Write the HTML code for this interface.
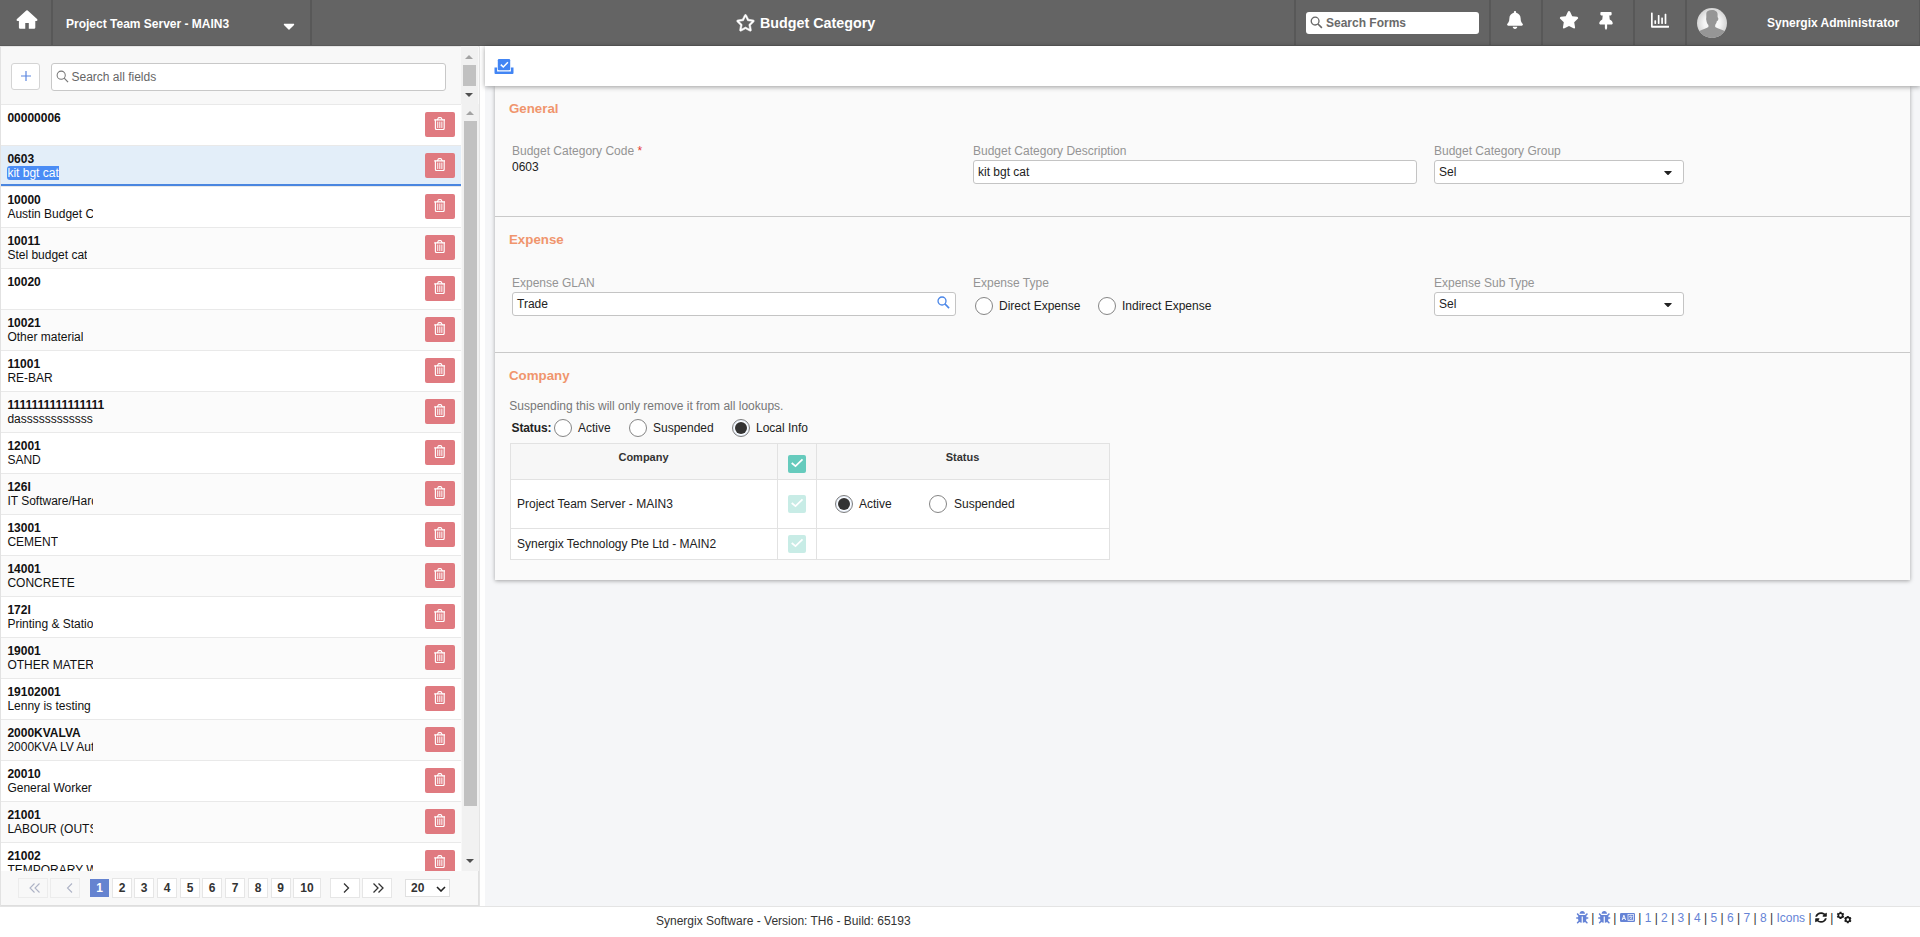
<!DOCTYPE html>
<html>
<head>
<meta charset="utf-8">
<title>Budget Category</title>
<style>
*{box-sizing:border-box;margin:0;padding:0}
html,body{width:1920px;height:937px;overflow:hidden}
body{font-family:"Liberation Sans",sans-serif;font-size:12px;color:#111;background:#f5f6f8;position:relative}
.abs{position:absolute}
/* header */
#hdr{position:absolute;left:0;top:0;width:1920px;height:46px;background:#646464;border-bottom:1px solid #5a5a5a;color:#fff}
#hdr .sep{position:absolute;top:0;width:2px;height:45px;background:#585858}
#hdr .t{position:absolute;font-weight:bold;white-space:nowrap}

.hi{position:absolute;fill:#fff}
.sfrm{position:absolute;left:1306px;top:12px;width:173px;height:22px;background:#fff;border-radius:3px}
.sfrm span{position:absolute;left:20px;top:4px;font-size:12px;line-height:14px;font-weight:bold;color:#6a6a6a;white-space:nowrap}
/* left */
#left{position:absolute;left:0;top:46px;width:480px;height:861px;background:#f8f8f8;box-shadow:inset 0 1px 0 #e6e6e6,inset 1px 0 0 #e2e2e2,inset -1px 0 0 #e4e4e4,inset 0 -2px 0 #dedede}
.row{position:absolute;left:1px;width:460px;height:41px;border-top:1px solid #e9e9e9;background:#fff}
.row.alt{background:#fbfbfb}
.row b{position:absolute;left:6.400px;top:6px;font-size:12px;line-height:14px;white-space:nowrap}
.row span{position:absolute;left:6.400px;top:20px;font-size:12px;line-height:14px;white-space:nowrap;max-width:85.600px;overflow:hidden}
.del{position:absolute;left:424px;top:7px;width:30px;height:25px;background:#e07a80;border-radius:2px}

.addb{position:absolute;left:11px;top:17px;width:29px;height:27px;border:1px solid #d4d4d4;border-radius:3px;background:#fff}
.addb svg{position:absolute;left:8.500px;top:6.500px}
.srch{position:absolute;left:51px;top:17px;width:395px;height:28px;border:1px solid #c8c8c8;border-radius:3px;background:#fff}
.srch span{position:absolute;left:19.500px;top:6px;font-size:12px;line-height:14px;color:#666}
#list{position:absolute;left:0;top:0;width:461px;height:825px;overflow:hidden}
.row.sel{background:#e3eef9;border-bottom:2px solid #4a86e0;height:41px}
.row i{font-style:normal;background:#4a8cf5;color:#fff;border-radius:3px 0 0 3px}
.tr{position:absolute;left:8.600px;top:4.900px;width:11.600px;height:13.200px}
.sb{position:absolute;width:17px;background:#f1f1f1}
.sb .th{position:absolute;left:2px;width:13px;background:#c1c1c1}
.sb .up{position:absolute;left:4px;width:0;height:0;border-left:4px solid transparent;border-right:4px solid transparent;border-bottom:4px solid #a3a3a3}
.sb .dn{position:absolute;left:4px;width:0;height:0;border-left:4px solid transparent;border-right:4px solid transparent;border-top:4px solid #505050}
#pag{position:absolute;left:1px;top:825px;width:478px;height:34px;background:#f8f8f8;border-right:1px solid #e0e0e0}
.pb{position:absolute;top:7px;width:20px;height:20px;border:1px solid #e6e6e6;background:#fff;text-align:center;font-size:12px;line-height:18px;color:#333;font-weight:bold}
.pb.act{background:#6583d0;border-color:#6583d0;color:#fff;font-weight:bold;-webkit-text-stroke:0}
.pb.dis{background:#f8f8f8;border-color:#ececec}
.pb svg{position:absolute;top:3.500px;left:9px}
.psel{position:absolute;left:404px;top:8px;width:45px;height:18px;border:1px solid #e0e0e0;background:#fff;font-size:12px;font-weight:bold;line-height:16px;padding-left:5px;color:#333}

#form{position:absolute;left:0;top:0;width:0;height:0}
.car{position:absolute;right:11.500px;top:4.500px;width:8px;height:13px;fill:#222}
.inp{overflow:visible}
.tbl{position:absolute;left:510px;top:443px;width:600px;height:117px;border:1px solid #e2e2e2;background:#fff}
.tbl .th{position:absolute;background:#f7f7f7}
.tbl .vl{position:absolute;top:0;width:1px;height:115px;background:#e2e2e2}
.tbl .hl{position:absolute;left:0;width:598px;height:1px;background:#e2e2e2}
.tbl .thd{position:absolute;top:7px;text-align:center;font-size:11px;line-height:13px;font-weight:bold;color:#333}
.chk{position:absolute;width:18px;height:18px;border-radius:2px}
.chk svg{position:absolute;left:0;top:0;width:18px;height:18px}
/* footer */
#ftr{position:absolute;left:0;top:906px;width:1920px;height:31px;background:#fff;border-top:1px solid #e4e4e4}

.fb{position:absolute;top:4px;font-size:12px;line-height:14px;color:#333}
.flinks{position:absolute;top:4px;font-size:12px;line-height:14px;color:#6583d6;white-space:pre}
.flinks span{color:#333}
/* right */
#tool{position:absolute;left:485px;top:46px;width:1435px;height:40px;background:#fff;box-shadow:0 1px 5px rgba(0,0,0,.38);z-index:3}
#card{position:absolute;left:495px;top:86px;width:1415px;height:494px;background:#fafafa;box-shadow:0 1px 4px rgba(0,0,0,.34)}
.sec{position:absolute;font-size:13.3px;line-height:16px;font-weight:bold;color:#f0956d;white-space:nowrap}
.lbl{position:absolute;font-size:12px;line-height:14px;color:#949494;white-space:nowrap}
.txt{position:absolute;font-size:12px;line-height:14px;color:#222;white-space:nowrap}
.inp{position:absolute;height:24px;border:1px solid #c4c4c4;border-radius:3px;background:#fff;font-size:12px;line-height:22px;padding-left:4px;color:#222}
.hr{position:absolute;left:495px;width:1415px;height:1px;background:#c9c9c9}
.radio{position:absolute;width:18px;height:18px;border:1px solid #858585;border-radius:50%;background:#fff}
.radio.on{border-color:#7d7d7d;box-shadow:inset 0 0 0 1px #e4eefc}
.radio.on:after{content:'';position:absolute;left:2px;top:2px;width:12px;height:12px;border-radius:50%;background:#333}
</style>
</head>
<body>
<div id="hdr">
  <svg class="hi" style="left:16px;top:9px;width:22px;height:21px" viewBox="16 9 22 21"><path d="M26.300 10.600Q27 10 27.700 10.600L37.300 19.300Q38 20.900 36.400 20.900L35.300 20.900L35.300 27.600Q35.300 28.800 34.100 28.800L28.800 28.800L28.800 23.100L25.250 23.100L25.250 28.800L20.100 28.800Q18.900 28.800 18.900 27.600L18.900 20.900L17.600 20.900Q16 20.900 16.700 19.300Z"/></svg>
  <div class="sep" style="left:51px"></div>
  <div class="t" style="left:66px;top:17px;font-size:12px">Project Team Server - MAIN3</div>
  <svg class="hi" style="left:282px;top:17px;width:14px;height:18px" viewBox="0 0 320 512"><path d="M31.300 192h257.300c17.800 0 26.700 21.500 14.100 34.100L174.100 354.800c-7.800 7.800-20.500 7.800-28.300 0L17.200 226.100C4.600 213.500 13.500 192 31.300 192z"/></svg>
  <div class="sep" style="left:310px"></div>
  <svg class="hi" style="left:736px;top:14px;width:19px;height:17.500px;stroke:#fff;stroke-width:16" viewBox="0 0 576 512"><path d="M528.100 171.500L382 150.200 316.700 17.800c-11.700-23.600-45.600-23.900-57.400 0L194 150.200 47.900 171.500c-26.200 3.800-36.700 36.100-17.700 54.600l105.700 103-25 145.500c-4.500 26.300 23.200 46 46.400 33.700L288 439.600l130.700 68.700c23.200 12.200 50.900-7.400 46.400-33.700l-25-145.500 105.700-103c19-18.500 8.500-50.800-17.700-54.600zM388.600 312.300l23.700 138.400L288 385.400l-124.300 65.300 23.700-138.400-100.600-98 139-20.200 62.200-126 62.200 126 139 20.200-100.600 98z"/></svg>
  <div class="t" style="left:760px;top:15px;font-size:14.3px">Budget Category</div>
  <div class="sep" style="left:1294px"></div>
  <div class="sfrm"><svg viewBox="0 0 14 14" style="position:absolute;left:3.500px;top:4.400px;width:13px;height:13px"><circle cx="5.500" cy="5.500" r="4.200" stroke="#666" stroke-width="1.400" fill="none"/><path d="M8.600 8.600L12.800 12.800" stroke="#666" stroke-width="1.700" fill="none"/></svg><span>Search Forms</span></div>
  <div class="sep" style="left:1489px"></div>
  <svg class="hi" style="left:1507px;top:10.5px;width:16px;height:18px" viewBox="0 0 448 512"><path d="M224 512c35.320 0 63.970-28.650 63.970-64H160.030c0 35.350 28.650 64 63.970 64zm215.390-149.710c-19.320-20.760-55.470-51.990-55.470-154.290 0-77.700-54.480-139.900-127.940-155.160V32c0-17.670-14.320-32-31.980-32s-31.980 14.330-31.980 32v20.840C118.560 68.100 64.080 130.300 64.080 208c0 102.300-36.150 133.530-55.470 154.290-6 6.450-8.660 14.160-8.610 21.710.110 16.400 12.980 32 32.100 32h383.800c19.120 0 32-15.600 32.100-32 .050-7.550-2.610-15.270-8.610-21.710z"/></svg>
  <div class="sep" style="left:1541px"></div>
  <svg class="hi" style="left:1559px;top:11px;width:20px;height:17.5px" viewBox="0 0 576 512"><path d="M259.300 17.800L194 150.200 47.900 171.500c-26.200 3.800-36.700 36.100-17.700 54.600l105.700 103-25 145.500c-4.500 26.300 23.200 46 46.400 33.700L288 439.600l130.700 68.700c23.200 12.200 50.900-7.400 46.400-33.700l-25-145.500 105.700-103c19-18.500 8.500-50.800-17.700-54.600L382 150.200 316.700 17.800c-11.700-23.600-45.600-23.900-57.400 0z"/></svg>
  <svg class="hi" style="left:1598.5px;top:11.5px;width:14px;height:18px" viewBox="0 0 384 512"><path d="M298.028 214.267L285.793 96H328c13.255 0 24-10.745 24-24V24c0-13.255-10.745-24-24-24H56C42.745 0 32 10.745 32 24v48c0 13.255 10.745 24 24 24h42.207L85.972 214.267C37.465 236.820 0 277.261 0 328c0 13.255 10.745 24 24 24h136v104.007c0 1.242.289 2.467.845 3.578l24 48c2.941 5.882 11.364 5.893 14.311 0l24-48a8.008 8.008 0 0 0 .845-3.578V352h136c13.255 0 24-10.745 24-24-.001-51.183-37.983-91.420-85.973-113.733z"/></svg>
  <div class="sep" style="left:1633px"></div>
  <svg class="hi" style="left:1651px;top:10.3px;width:18.2px;height:20.3px" preserveAspectRatio="none" viewBox="0 0 512 512"><path d="M396.800 352h22.400c6.400 0 12.800-6.400 12.800-12.800V108.800c0-6.400-6.400-12.800-12.800-12.800h-22.400c-6.400 0-12.800 6.400-12.800 12.800v230.400c0 6.400 6.400 12.800 12.800 12.800zm-192 0h22.400c6.400 0 12.800-6.400 12.800-12.800V140.800c0-6.400-6.400-12.800-12.800-12.800h-22.400c-6.400 0-12.800 6.400-12.800 12.800v198.400c0 6.400 6.400 12.800 12.800 12.800zm96 0h22.400c6.400 0 12.800-6.400 12.800-12.800V204.800c0-6.400-6.400-12.800-12.800-12.800h-22.400c-6.400 0-12.800 6.400-12.800 12.800v134.400c0 6.400 6.400 12.800 12.800 12.800zM496 400H48V80c0-8.840-7.160-16-16-16H16C7.160 64 0 71.160 0 80v336c0 17.670 14.330 32 32 32h464c8.840 0 16-7.160 16-16v-16c0-8.840-7.160-16-16-16zm-387.200-48h22.400c6.400 0 12.800-6.400 12.800-12.800v-70.400c0-6.400-6.400-12.800-12.800-12.800h-22.400c-6.400 0-12.800 6.400-12.800 12.800v70.400c0 6.400 6.400 12.800 12.800 12.800z"/></svg>
  <div class="sep" style="left:1685px"></div>
  <svg class="abs" style="left:1697px;top:8px;width:30px;height:30px" viewBox="0 0 30 30"><defs><radialGradient id="avg" cx="50%" cy="50%" r="50%"><stop offset="0" stop-color="#fff"/><stop offset="0.55" stop-color="#f4f4f4"/><stop offset="1" stop-color="#d4d4d4"/></radialGradient><clipPath id="avc"><circle cx="15" cy="15" r="15"/></clipPath></defs><circle cx="15" cy="15" r="15" fill="url(#avg)"/><g clip-path="url(#avc)" fill="#969696"><path d="M9.300 5.500c0-2.200 2.200-3.600 5.700-3.600 3.400 0 5.600 1.600 5.600 4.200v3.200c.6.300.9 1 .7 1.900-.2 1-.8 1.700-1.400 1.900-.3 1.700-1 3-1.700 3.800v2c2 1.200 6.500 2.600 9.800 4.400v7H2v-7c3.300-1.800 7.400-3.200 9.400-4.400v-2c-.9-.8-1.800-2.400-2-4.400-.3-.9-.3-2.300-.1-3.300z"/></g></svg>
  <div class="sep" style="left:1919px;width:1px"></div>
  <div class="t" style="left:1767px;top:16px;font-size:12px">Synergix Administrator</div>
</div>

<div id="left">
  <div class="addb"><svg viewBox="0 0 10 10" width="10" height="10"><path d="M5 0v10M0 5h10" stroke="#5b86e0" stroke-width="1.200" fill="none"/></svg></div>
  <div class="srch"><svg viewBox="0 0 14 14" width="13" height="13" style="position:absolute;left:3.500px;top:6px"><circle cx="5.6" cy="5.6" r="4.4" stroke="#777" stroke-width="1.1" fill="none"/><path d="M8.8 8.8L13 13" stroke="#777" stroke-width="1.3" fill="none"/></svg><span>Search all fields</span></div>
  <div id="list">
<div class="row" style="top:58px"><b>00000006</b><div class="del"><svg class="tr" viewBox="0 0 11.6 13.2"><g fill="none" stroke="#fff" stroke-linecap="round" stroke-linejoin="round"><path d="M0.600 2.900H11" stroke-width="1.150"/><path d="M3.400 2.800L4.300 0.900Q4.500 0.600 4.900 0.600H6.700Q7.100 0.600 7.300 0.900L8.200 2.800" stroke-width="1.100"/><path d="M1.400 3.200V11.200Q1.400 12.600 2.800 12.600H8.800Q10.200 12.600 10.200 11.200V3.200" stroke-width="1.150"/><path d="M3.750 5V10.600M5.800 5V10.600M7.850 5V10.600" stroke-width="0.950"/></g></svg></div></div>
<div class="row alt sel" style="top:99px"><b>0603</b><span><i>kit bgt cat</i></span><div class="del"><svg class="tr" viewBox="0 0 11.6 13.2"><g fill="none" stroke="#fff" stroke-linecap="round" stroke-linejoin="round"><path d="M0.600 2.900H11" stroke-width="1.150"/><path d="M3.400 2.800L4.300 0.900Q4.500 0.600 4.900 0.600H6.700Q7.100 0.600 7.300 0.900L8.200 2.800" stroke-width="1.100"/><path d="M1.400 3.200V11.200Q1.400 12.600 2.800 12.600H8.800Q10.200 12.600 10.200 11.200V3.200" stroke-width="1.150"/><path d="M3.750 5V10.600M5.800 5V10.600M7.850 5V10.600" stroke-width="0.950"/></g></svg></div></div>
<div class="row" style="top:140px"><b>10000</b><span>Austin Budget C</span><div class="del"><svg class="tr" viewBox="0 0 11.6 13.2"><g fill="none" stroke="#fff" stroke-linecap="round" stroke-linejoin="round"><path d="M0.600 2.900H11" stroke-width="1.150"/><path d="M3.400 2.800L4.300 0.900Q4.500 0.600 4.900 0.600H6.700Q7.100 0.600 7.300 0.900L8.200 2.800" stroke-width="1.100"/><path d="M1.400 3.200V11.200Q1.400 12.600 2.800 12.600H8.800Q10.200 12.600 10.200 11.200V3.200" stroke-width="1.150"/><path d="M3.750 5V10.600M5.800 5V10.600M7.850 5V10.600" stroke-width="0.950"/></g></svg></div></div>
<div class="row alt" style="top:181px"><b>10011</b><span>Stel budget cat</span><div class="del"><svg class="tr" viewBox="0 0 11.6 13.2"><g fill="none" stroke="#fff" stroke-linecap="round" stroke-linejoin="round"><path d="M0.600 2.900H11" stroke-width="1.150"/><path d="M3.400 2.800L4.300 0.900Q4.500 0.600 4.900 0.600H6.700Q7.100 0.600 7.300 0.900L8.200 2.800" stroke-width="1.100"/><path d="M1.400 3.200V11.200Q1.400 12.600 2.800 12.600H8.800Q10.200 12.600 10.200 11.200V3.200" stroke-width="1.150"/><path d="M3.750 5V10.600M5.800 5V10.600M7.850 5V10.600" stroke-width="0.950"/></g></svg></div></div>
<div class="row" style="top:222px"><b>10020</b><div class="del"><svg class="tr" viewBox="0 0 11.6 13.2"><g fill="none" stroke="#fff" stroke-linecap="round" stroke-linejoin="round"><path d="M0.600 2.900H11" stroke-width="1.150"/><path d="M3.400 2.800L4.300 0.900Q4.500 0.600 4.900 0.600H6.700Q7.100 0.600 7.300 0.900L8.200 2.800" stroke-width="1.100"/><path d="M1.400 3.200V11.200Q1.400 12.600 2.800 12.600H8.800Q10.200 12.600 10.200 11.200V3.200" stroke-width="1.150"/><path d="M3.750 5V10.600M5.800 5V10.600M7.850 5V10.600" stroke-width="0.950"/></g></svg></div></div>
<div class="row alt" style="top:263px"><b>10021</b><span>Other material</span><div class="del"><svg class="tr" viewBox="0 0 11.6 13.2"><g fill="none" stroke="#fff" stroke-linecap="round" stroke-linejoin="round"><path d="M0.600 2.900H11" stroke-width="1.150"/><path d="M3.400 2.800L4.300 0.900Q4.500 0.600 4.900 0.600H6.700Q7.100 0.600 7.300 0.900L8.200 2.800" stroke-width="1.100"/><path d="M1.400 3.200V11.200Q1.400 12.600 2.800 12.600H8.800Q10.200 12.600 10.200 11.200V3.200" stroke-width="1.150"/><path d="M3.750 5V10.600M5.800 5V10.600M7.850 5V10.600" stroke-width="0.950"/></g></svg></div></div>
<div class="row" style="top:304px"><b>11001</b><span>RE-BAR</span><div class="del"><svg class="tr" viewBox="0 0 11.6 13.2"><g fill="none" stroke="#fff" stroke-linecap="round" stroke-linejoin="round"><path d="M0.600 2.900H11" stroke-width="1.150"/><path d="M3.400 2.800L4.300 0.900Q4.500 0.600 4.900 0.600H6.700Q7.100 0.600 7.300 0.900L8.200 2.800" stroke-width="1.100"/><path d="M1.400 3.200V11.200Q1.400 12.600 2.800 12.600H8.800Q10.200 12.600 10.200 11.200V3.200" stroke-width="1.150"/><path d="M3.750 5V10.600M5.800 5V10.600M7.850 5V10.600" stroke-width="0.950"/></g></svg></div></div>
<div class="row alt" style="top:345px"><b>1111111111111111</b><span>dasssssssssssss</span><div class="del"><svg class="tr" viewBox="0 0 11.6 13.2"><g fill="none" stroke="#fff" stroke-linecap="round" stroke-linejoin="round"><path d="M0.600 2.900H11" stroke-width="1.150"/><path d="M3.400 2.800L4.300 0.900Q4.500 0.600 4.900 0.600H6.700Q7.100 0.600 7.300 0.900L8.200 2.800" stroke-width="1.100"/><path d="M1.400 3.200V11.200Q1.400 12.600 2.800 12.600H8.800Q10.200 12.600 10.200 11.200V3.200" stroke-width="1.150"/><path d="M3.750 5V10.600M5.800 5V10.600M7.850 5V10.600" stroke-width="0.950"/></g></svg></div></div>
<div class="row" style="top:386px"><b>12001</b><span>SAND</span><div class="del"><svg class="tr" viewBox="0 0 11.6 13.2"><g fill="none" stroke="#fff" stroke-linecap="round" stroke-linejoin="round"><path d="M0.600 2.900H11" stroke-width="1.150"/><path d="M3.400 2.800L4.300 0.900Q4.500 0.600 4.900 0.600H6.700Q7.100 0.600 7.300 0.900L8.200 2.800" stroke-width="1.100"/><path d="M1.400 3.200V11.200Q1.400 12.600 2.800 12.600H8.800Q10.200 12.600 10.200 11.200V3.200" stroke-width="1.150"/><path d="M3.750 5V10.600M5.800 5V10.600M7.850 5V10.600" stroke-width="0.950"/></g></svg></div></div>
<div class="row alt" style="top:427px"><b>126I</b><span>IT Software/Hardware</span><div class="del"><svg class="tr" viewBox="0 0 11.6 13.2"><g fill="none" stroke="#fff" stroke-linecap="round" stroke-linejoin="round"><path d="M0.600 2.900H11" stroke-width="1.150"/><path d="M3.400 2.800L4.300 0.900Q4.500 0.600 4.900 0.600H6.700Q7.100 0.600 7.300 0.900L8.200 2.800" stroke-width="1.100"/><path d="M1.400 3.200V11.200Q1.400 12.600 2.800 12.600H8.800Q10.200 12.600 10.200 11.200V3.200" stroke-width="1.150"/><path d="M3.750 5V10.600M5.800 5V10.600M7.850 5V10.600" stroke-width="0.950"/></g></svg></div></div>
<div class="row" style="top:468px"><b>13001</b><span>CEMENT</span><div class="del"><svg class="tr" viewBox="0 0 11.6 13.2"><g fill="none" stroke="#fff" stroke-linecap="round" stroke-linejoin="round"><path d="M0.600 2.900H11" stroke-width="1.150"/><path d="M3.400 2.800L4.300 0.900Q4.500 0.600 4.900 0.600H6.700Q7.100 0.600 7.300 0.900L8.200 2.800" stroke-width="1.100"/><path d="M1.400 3.200V11.200Q1.400 12.600 2.800 12.600H8.800Q10.200 12.600 10.200 11.200V3.200" stroke-width="1.150"/><path d="M3.750 5V10.600M5.800 5V10.600M7.850 5V10.600" stroke-width="0.950"/></g></svg></div></div>
<div class="row alt" style="top:509px"><b>14001</b><span>CONCRETE</span><div class="del"><svg class="tr" viewBox="0 0 11.6 13.2"><g fill="none" stroke="#fff" stroke-linecap="round" stroke-linejoin="round"><path d="M0.600 2.900H11" stroke-width="1.150"/><path d="M3.400 2.800L4.300 0.900Q4.500 0.600 4.900 0.600H6.700Q7.100 0.600 7.300 0.900L8.200 2.800" stroke-width="1.100"/><path d="M1.400 3.200V11.200Q1.400 12.600 2.800 12.600H8.800Q10.200 12.600 10.200 11.200V3.200" stroke-width="1.150"/><path d="M3.750 5V10.600M5.800 5V10.600M7.850 5V10.600" stroke-width="0.950"/></g></svg></div></div>
<div class="row" style="top:550px"><b>172I</b><span>Printing &amp; Stationery</span><div class="del"><svg class="tr" viewBox="0 0 11.6 13.2"><g fill="none" stroke="#fff" stroke-linecap="round" stroke-linejoin="round"><path d="M0.600 2.900H11" stroke-width="1.150"/><path d="M3.400 2.800L4.300 0.900Q4.500 0.600 4.900 0.600H6.700Q7.100 0.600 7.300 0.900L8.200 2.800" stroke-width="1.100"/><path d="M1.400 3.200V11.200Q1.400 12.600 2.800 12.600H8.800Q10.200 12.600 10.200 11.200V3.200" stroke-width="1.150"/><path d="M3.750 5V10.600M5.800 5V10.600M7.850 5V10.600" stroke-width="0.950"/></g></svg></div></div>
<div class="row alt" style="top:591px"><b>19001</b><span>OTHER MATERIAL</span><div class="del"><svg class="tr" viewBox="0 0 11.6 13.2"><g fill="none" stroke="#fff" stroke-linecap="round" stroke-linejoin="round"><path d="M0.600 2.900H11" stroke-width="1.150"/><path d="M3.400 2.800L4.300 0.900Q4.500 0.600 4.900 0.600H6.700Q7.100 0.600 7.300 0.900L8.200 2.800" stroke-width="1.100"/><path d="M1.400 3.200V11.200Q1.400 12.600 2.800 12.600H8.800Q10.200 12.600 10.200 11.200V3.200" stroke-width="1.150"/><path d="M3.750 5V10.600M5.800 5V10.600M7.850 5V10.600" stroke-width="0.950"/></g></svg></div></div>
<div class="row" style="top:632px"><b>19102001</b><span>Lenny is testing</span><div class="del"><svg class="tr" viewBox="0 0 11.6 13.2"><g fill="none" stroke="#fff" stroke-linecap="round" stroke-linejoin="round"><path d="M0.600 2.900H11" stroke-width="1.150"/><path d="M3.400 2.800L4.300 0.900Q4.500 0.600 4.900 0.600H6.700Q7.100 0.600 7.300 0.900L8.200 2.800" stroke-width="1.100"/><path d="M1.400 3.200V11.200Q1.400 12.600 2.800 12.600H8.800Q10.200 12.600 10.200 11.200V3.200" stroke-width="1.150"/><path d="M3.750 5V10.600M5.800 5V10.600M7.850 5V10.600" stroke-width="0.950"/></g></svg></div></div>
<div class="row alt" style="top:673px"><b>2000KVALVA</b><span>2000KVA LV Auto</span><div class="del"><svg class="tr" viewBox="0 0 11.6 13.2"><g fill="none" stroke="#fff" stroke-linecap="round" stroke-linejoin="round"><path d="M0.600 2.900H11" stroke-width="1.150"/><path d="M3.400 2.800L4.300 0.900Q4.500 0.600 4.900 0.600H6.700Q7.100 0.600 7.300 0.900L8.200 2.800" stroke-width="1.100"/><path d="M1.400 3.200V11.200Q1.400 12.600 2.800 12.600H8.800Q10.200 12.600 10.200 11.200V3.200" stroke-width="1.150"/><path d="M3.750 5V10.600M5.800 5V10.600M7.850 5V10.600" stroke-width="0.950"/></g></svg></div></div>
<div class="row" style="top:714px"><b>20010</b><span>General Worker</span><div class="del"><svg class="tr" viewBox="0 0 11.6 13.2"><g fill="none" stroke="#fff" stroke-linecap="round" stroke-linejoin="round"><path d="M0.600 2.900H11" stroke-width="1.150"/><path d="M3.400 2.800L4.300 0.900Q4.500 0.600 4.900 0.600H6.700Q7.100 0.600 7.300 0.900L8.200 2.800" stroke-width="1.100"/><path d="M1.400 3.200V11.200Q1.400 12.600 2.800 12.600H8.800Q10.200 12.600 10.200 11.200V3.200" stroke-width="1.150"/><path d="M3.750 5V10.600M5.800 5V10.600M7.850 5V10.600" stroke-width="0.950"/></g></svg></div></div>
<div class="row alt" style="top:755px"><b>21001</b><span>LABOUR (OUTSOURCE)</span><div class="del"><svg class="tr" viewBox="0 0 11.6 13.2"><g fill="none" stroke="#fff" stroke-linecap="round" stroke-linejoin="round"><path d="M0.600 2.900H11" stroke-width="1.150"/><path d="M3.400 2.800L4.300 0.900Q4.500 0.600 4.900 0.600H6.700Q7.100 0.600 7.300 0.900L8.200 2.800" stroke-width="1.100"/><path d="M1.400 3.200V11.200Q1.400 12.600 2.800 12.600H8.800Q10.200 12.600 10.200 11.200V3.200" stroke-width="1.150"/><path d="M3.750 5V10.600M5.800 5V10.600M7.850 5V10.600" stroke-width="0.950"/></g></svg></div></div>
<div class="row" style="top:796px"><b>21002</b><span>TEMPORARY WORKS</span><div class="del"><svg class="tr" viewBox="0 0 11.6 13.2"><g fill="none" stroke="#fff" stroke-linecap="round" stroke-linejoin="round"><path d="M0.600 2.900H11" stroke-width="1.150"/><path d="M3.400 2.800L4.300 0.900Q4.500 0.600 4.900 0.600H6.700Q7.100 0.600 7.300 0.900L8.200 2.800" stroke-width="1.100"/><path d="M1.400 3.200V11.200Q1.400 12.600 2.800 12.600H8.800Q10.200 12.600 10.200 11.200V3.200" stroke-width="1.150"/><path d="M3.750 5V10.600M5.800 5V10.600M7.850 5V10.600" stroke-width="0.950"/></g></svg></div></div>

  </div>
  <!-- scrollbars -->
  <div class="sb" style="left:461px;top:0;height:58px"><div class="up" style="top:9px"></div><div class="th" style="top:19px;height:21px"></div><div class="dn" style="top:47px"></div></div>
  <div class="sb" style="left:462px;top:58px;height:767px"><div class="up" style="top:7px"></div><div class="th" style="top:17px;height:685px"></div><div class="dn" style="top:755px"></div></div>
  <div id="pag">
    <div class="pb dis" style="left:17px;width:30px"><svg viewBox="0 0 12 10" width="12" height="10" style="left:10px"><path d="M5.5 0.5L1 5l4.5 4.5M10.5 0.5L6 5l4.5 4.5" stroke="#aeb3c6" stroke-width="1.1" fill="none"/></svg></div>
    <div class="pb dis" style="left:49px;width:30px"><svg viewBox="0 0 12 10" width="12" height="10" style="left:12.500px"><path d="M8 0.5L3.5 5 8 9.5" stroke="#aeb3c6" stroke-width="1.1" fill="none"/></svg></div>
<div class="pb act" style="left:89px;top:8px;width:19px;height:18px;line-height:16px">1</div>
<div class="pb" style="left:111px">2</div>
<div class="pb" style="left:133px">3</div>
<div class="pb" style="left:156px">4</div>
<div class="pb" style="left:179px">5</div>
<div class="pb" style="left:201px">6</div>
<div class="pb" style="left:224px">7</div>
<div class="pb" style="left:247px">8</div>
<div class="pb" style="left:269.5px">9</div>
<div class="pb" style="left:292px;width:28px">10</div>
    <div class="pb" style="left:329px;width:30px"><svg viewBox="0 0 12 10" width="12" height="10"><path d="M4 0.5L8.5 5 4 9.5" stroke="#333" stroke-width="1.3" fill="none"/></svg></div>
    <div class="pb" style="left:361px;width:30px"><svg viewBox="0 0 12 10" width="12" height="10"><path d="M1.5 0.5L6 5 1.5 9.5M6.5 0.5L11 5 6.5 9.5" stroke="#333" stroke-width="1.3" fill="none"/></svg></div>
    <div class="psel">20<svg viewBox="0 0 10 6" width="10" height="6" style="position:absolute;left:30px;top:5.500px"><path d="M1 1l4 4 4-4" stroke="#222" stroke-width="1.6" fill="none"/></svg></div>
  </div>
</div>

<div class="abs" style="left:480px;top:46px;width:5px;height:860px;background:#fff"></div>
<div id="tool">
  <svg class="abs" style="left:9px;top:12px;width:20px;height:16px" viewBox="0 0 20 16"><rect x="3.8" y="1" width="12.4" height="11.3" rx="1.2" fill="#4285f4"/><path d="M0.5 9.6h2.600v4h13.800v-4h2.600v5.300a1 1 0 0 1-1 1h-17a1 1 0 0 1-1-1z" fill="#4285f4"/><path d="M6.800 6.600l2.500 2.400 4.600-4.700" stroke="#fff" stroke-width="1.500" fill="none"/></svg>
</div>
<div id="card"></div>
<div id="form">
  <div class="sec" style="left:509px;top:101px">General</div>
  <div class="lbl" style="left:512px;top:144px">Budget Category Code <span style="color:#e53935">*</span></div>
  <div class="txt" style="left:512px;top:160px">0603</div>
  <div class="lbl" style="left:973px;top:144px">Budget Category Description</div>
  <div class="inp" style="left:973px;top:160px;width:444px">kit bgt cat</div>
  <div class="lbl" style="left:1434px;top:144px">Budget Category Group</div>
  <div class="inp" style="left:1434px;top:160px;width:250px">Sel<svg class="car" viewBox="0 0 320 512"><path d="M31.300 192h257.300c17.800 0 26.700 21.500 14.100 34.100L174.100 354.800c-7.800 7.800-20.500 7.800-28.300 0L17.200 226.100C4.600 213.500 13.500 192 31.300 192z"/></svg></div>
  <div class="hr" style="top:216px"></div>

  <div class="sec" style="left:509px;top:232px">Expense</div>
  <div class="lbl" style="left:512px;top:276px">Expense GLAN</div>
  <div class="inp" style="left:512px;top:292px;width:444px">Trade<svg viewBox="0 0 14 14" style="position:absolute;left:424px;top:3px;width:13px;height:13px"><circle cx="5.400" cy="5.400" r="4.300" stroke="#4a86e8" stroke-width="1.400" fill="none"/><path d="M8.500 8.500L13 13" stroke="#4a86e8" stroke-width="1.700" fill="none"/></svg></div>
  <div class="lbl" style="left:973px;top:276px">Expense Type</div>
  <div class="radio" style="left:975px;top:297px"></div>
  <div class="txt" style="left:999px;top:299px">Direct Expense</div>
  <div class="radio" style="left:1098px;top:297px"></div>
  <div class="txt" style="left:1122px;top:299px">Indirect Expense</div>
  <div class="lbl" style="left:1434px;top:276px">Expense Sub Type</div>
  <div class="inp" style="left:1434px;top:292px;width:250px">Sel<svg class="car" viewBox="0 0 320 512"><path d="M31.300 192h257.300c17.800 0 26.700 21.500 14.100 34.100L174.100 354.800c-7.800 7.800-20.500 7.800-28.300 0L17.200 226.100C4.600 213.500 13.500 192 31.300 192z"/></svg></div>
  <div class="hr" style="top:352px"></div>

  <div class="sec" style="left:509px;top:368px">Company</div>
  <div class="txt" style="left:509.300px;top:399px;color:#777">Suspending this will only remove it from all lookups.</div>
  <div class="txt" style="left:511.500px;top:421px;font-weight:bold;letter-spacing:-0.100px">Status:</div>
  <div class="radio" style="left:554px;top:419px"></div>
  <div class="txt" style="left:578px;top:421px">Active</div>
  <div class="radio" style="left:629px;top:419px"></div>
  <div class="txt" style="left:653px;top:421px">Suspended</div>
  <div class="radio on" style="left:732px;top:419px"></div>
  <div class="txt" style="left:756px;top:421px">Local Info</div>

  <div class="tbl">
    <div class="th" style="left:0;top:0;width:598px;height:35px"></div>
    <div class="vl" style="left:266px"></div>
    <div class="vl" style="left:305px"></div>
    <div class="hl" style="top:35px"></div>
    <div class="hl" style="top:84px"></div>
    <div class="thd" style="left:0;width:265px">Company</div>
    <div class="thd" style="left:305px;width:293px">Status</div>
    <div class="chk" style="left:277px;top:11px;background:#66cbbd"><svg viewBox="0 0 18 18"><path d="M3.700 8l3.800 3.200 7-6.900" stroke="#fff" stroke-width="1.700" fill="none"/></svg></div>
    <div class="chk" style="left:277px;top:51px;background:#c8ece6"><svg viewBox="0 0 18 18"><path d="M3.700 8l3.800 3.200 7-6.900" stroke="#fff" stroke-width="1.700" fill="none"/></svg></div>
    <div class="chk" style="left:277px;top:91px;background:#c8ece6"><svg viewBox="0 0 18 18"><path d="M3.700 8l3.800 3.200 7-6.900" stroke="#fff" stroke-width="1.700" fill="none"/></svg></div>
    <div class="txt" style="left:6px;top:53px">Project Team Server - MAIN3</div>
    <div class="txt" style="left:6px;top:93px">Synergix Technology Pte Ltd - MAIN2</div>
    <div class="radio on" style="left:324px;top:51px"></div>
    <div class="txt" style="left:348px;top:53px">Active</div>
    <div class="radio" style="left:418px;top:51px"></div>
    <div class="txt" style="left:443px;top:53px">Suspended</div>
  </div>
</div>

<div id="ftr">
  <div class="abs" style="left:656px;top:7px;font-size:12px;color:#333;white-space:nowrap">Synergix Software - Version: TH6 - Build: 65193</div>
  <svg class="abs" style="left:1576px;top:4px;width:12.500px;height:12.500px;fill:#6583d6" viewBox="0 0 512 512"><path d="M511.988 288.900c-.478 17.430-15.217 31.100-32.653 31.100H424v16c0 21.864-4.882 42.584-13.600 61.145l60.228 60.228c12.496 12.497 12.496 32.758 0 45.255-12.498 12.497-32.759 12.496-45.256 0l-54.736-54.736C345.886 467.965 314.351 480 280 480V236c0-6.627-5.373-12-12-12h-24c-6.627 0-12 5.373-12 12v244c-34.351 0-65.886-12.035-90.636-32.108l-54.736 54.736c-12.498 12.497-32.759 12.496-45.256 0-12.496-12.497-12.496-32.758 0-45.255l60.228-60.228C92.882 378.584 88 357.864 88 336v-16H32.666C15.230 320 .491 306.330.013 288.900-.484 270.816 14.028 256 32 256h56v-58.745l-46.628-46.628c-12.496-12.497-12.496-32.758 0-45.255 12.498-12.497 32.758-12.497 45.256 0L141.255 160h229.489l54.627-54.627c12.498-12.497 32.758-12.497 45.256 0 12.496 12.497 12.496 32.758 0 45.255L424 197.255V256h56c17.972 0 32.484 14.816 31.988 32.900zM257 0c-61.856 0-112 50.144-112 112h224C369 50.144 318.856 0 257 0z"/></svg>
  <span class="fb" style="left:1591.34px">|</span>
  <svg class="abs" style="left:1598px;top:4px;width:12.500px;height:12.500px;fill:#6583d6" viewBox="0 0 512 512"><path d="M511.988 288.900c-.478 17.430-15.217 31.100-32.653 31.100H424v16c0 21.864-4.882 42.584-13.600 61.145l60.228 60.228c12.496 12.497 12.496 32.758 0 45.255-12.498 12.497-32.759 12.496-45.256 0l-54.736-54.736C345.886 467.965 314.351 480 280 480V236c0-6.627-5.373-12-12-12h-24c-6.627 0-12 5.373-12 12v244c-34.351 0-65.886-12.035-90.636-32.108l-54.736 54.736c-12.498 12.497-32.759 12.496-45.256 0-12.496-12.497-12.496-32.758 0-45.255l60.228-60.228C92.882 378.584 88 357.864 88 336v-16H32.666C15.230 320 .491 306.330.013 288.900-.484 270.816 14.028 256 32 256h56v-58.745l-46.628-46.628c-12.496-12.497-12.496-32.758 0-45.255 12.498-12.497 32.758-12.497 45.256 0L141.255 160h229.489l54.627-54.627c12.498-12.497 32.758-12.497 45.256 0 12.496 12.497 12.496 32.758 0 45.255L424 197.255V256h56c17.972 0 32.484 14.816 31.988 32.900zM257 0c-61.856 0-112 50.144-112 112h224C369 50.144 318.856 0 257 0z"/></svg>
  <span class="fb" style="left:1613.14px">|</span>
  <svg class="abs" style="left:1620px;top:6px;width:15px;height:9px" viewBox="0 0 15 9"><rect x="0" y="0" width="15" height="9" rx="1.300" fill="#6583d6"/><path d="M2.200 7L3.900 2.200 5.600 7M2.800 5.400h2.200" stroke="#fff" stroke-width="0.900" fill="none"/><rect x="8" y="1.500" width="5.500" height="6" fill="none" stroke="#fff" stroke-width="0.700"/><path d="M9 3.500h3.500M10.800 2.300v1.200M9.300 6.500c1.300-.6 2.300-1.600 2.700-3M10 4.500c.5 1 1.300 1.600 2.300 2" stroke="#fff" stroke-width="0.600" fill="none"/></svg>
  <div class="flinks" style="left:1638.200px"><span>|</span> 1 <span>|</span> 2 <span>|</span> 3 <span>|</span> 4 <span>|</span> 5 <span>|</span> 6 <span>|</span> 7 <span>|</span> 8 <span>|</span> Icons <span>|</span></div>
  <svg class="abs" style="left:1815px;top:5px;width:12px;height:11px;fill:#1c1c1c" preserveAspectRatio="none" viewBox="0 0 512 512"><path d="M370.720 133.280C339.458 104.008 298.888 87.962 255.848 88c-77.458.068-144.328 53.178-162.791 126.850-1.344 5.363-6.122 9.150-11.651 9.150H24.103c-7.498 0-13.194-6.807-11.807-14.176C33.933 94.924 134.813 8 256 8c66.448 0 126.791 26.136 171.315 68.685L463.030 40.970C478.149 25.851 504 36.559 504 57.941V192c0 13.255-10.745 24-24 24H345.941c-21.382 0-32.090-25.851-16.971-40.971l41.750-41.749zM32 296h134.059c21.382 0 32.090 25.851 16.971 40.971l-41.750 41.750c31.262 29.273 71.835 45.319 114.876 45.280 77.418-.070 144.315-53.144 162.787-126.849 1.344-5.363 6.122-9.150 11.651-9.150h57.304c7.498 0 13.194 6.807 11.807 14.176C478.067 417.076 377.187 504 256 504c-66.448 0-126.791-26.136-171.315-68.685L48.970 471.030C33.851 486.149 8 475.441 8 454.059V320c0-13.255 10.745-24 24-24z"/></svg>
  <span class="fb" style="left:1830.34px">|</span>
  <svg class="abs" style="left:1836px;top:4px;width:17px;height:14px" viewBox="0 0 17 14"><circle cx="4.5" cy="4.4" r="2.150" stroke="#1c1c1c" stroke-width="1.700" fill="none"/><path d="M6.58 5.60L7.70 6.25M4.50 6.80L4.50 8.10M2.42 5.60L1.30 6.25M2.42 3.20L1.30 2.55M4.50 2.00L4.50 0.70M6.58 3.20L7.70 2.55" stroke="#1c1c1c" stroke-width="1.900" fill="none"/><circle cx="11.8" cy="8.6" r="2.150" stroke="#1c1c1c" stroke-width="1.700" fill="none"/><path d="M13.88 9.80L15.00 10.45M11.80 11.00L11.80 12.30M9.72 9.80L8.60 10.45M9.72 7.40L8.60 6.75M11.80 6.20L11.80 4.90M13.88 7.40L15.00 6.75" stroke="#1c1c1c" stroke-width="1.900" fill="none"/></svg>
</div>
</body>
</html>
